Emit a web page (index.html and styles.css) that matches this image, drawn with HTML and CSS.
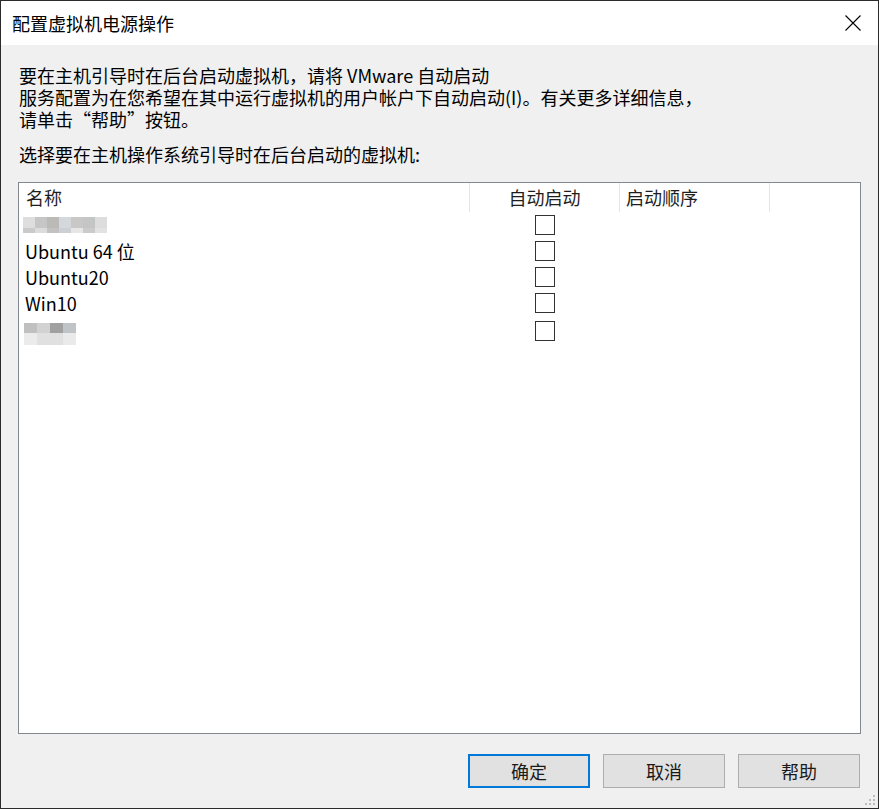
FILE: index.html
```html
<!DOCTYPE html>
<html lang="zh-CN">
<head>
  <meta charset="UTF-8">
  <meta name="viewport" content="width=device-width, initial-scale=1.0">
  <title>配置虚拟机电源操作</title>
  <link rel="stylesheet" href="styles.css">
</head>
<body>
  <div class="dialog">
    <div class="titlebar">
      <span class="title">配置虚拟机电源操作</span>
      <svg class="close" width="16" height="16" viewBox="0 0 16 16">
        <path d="M0.5 0.5 L15.5 15.5 M15.5 0.5 L0.5 15.5" stroke="#000" stroke-width="1.1" fill="none"/>
      </svg>
    </div>

    <div class="content">
      <p class="intro">要在主机引导时在后台启动虚拟机，请将 VMware 自动启动<br>服务配置为在您希望在其中运行虚拟机的用户帐户下自动启动(I)。有关更多详细信息，<br>请单击“帮助”按钮。</p>
      <p class="prompt">选择要在主机操作系统引导时在后台启动的虚拟机:</p>

      <div class="vm-list">
        <div class="list-head">
          <div class="col col-name">名称</div>
          <div class="col col-auto">自动启动</div>
          <div class="col col-order">启动顺序</div>
          <div class="col col-rest"></div>
        </div>
        <div class="vm-row">
          <div class="cell-name"><span class="mosaic mosaic-a"></span></div>
          <div class="cell-auto"><span class="check"></span></div>
        </div>
        <div class="vm-row">
          <div class="cell-name">Ubuntu 64 位</div>
          <div class="cell-auto"><span class="check"></span></div>
        </div>
        <div class="vm-row">
          <div class="cell-name">Ubuntu20</div>
          <div class="cell-auto"><span class="check"></span></div>
        </div>
        <div class="vm-row">
          <div class="cell-name">Win10</div>
          <div class="cell-auto"><span class="check"></span></div>
        </div>
        <div class="vm-row">
          <div class="cell-name"><span class="mosaic mosaic-b"></span></div>
          <div class="cell-auto"><span class="check"></span></div>
        </div>
      </div>

      <div class="actions">
        <button class="btn btn-default">确定</button>
        <button class="btn">取消</button>
        <button class="btn">帮助</button>
      </div>
    </div>

    <svg class="grip" width="12" height="12" viewBox="0 0 12 12">
      <g fill="#bcbcbc">
        <rect x="10" y="2" width="2" height="2"/>
        <rect x="6" y="6" width="2" height="2"/>
        <rect x="10" y="6" width="2" height="2"/>
        <rect x="2" y="10" width="2" height="2"/>
        <rect x="6" y="10" width="2" height="2"/>
        <rect x="10" y="10" width="2" height="2"/>
      </g>
    </svg>
  </div>
</body>
</html>
```

FILE: styles.css
```css
* { box-sizing: border-box; }
body { margin: 0; font-family: "Noto Sans CJK SC", "Noto Sans", sans-serif; font-size: 18px; color: #000; background: #f0f0f0; }

.dialog { position: relative; width: 879px; height: 809px; border: 1px solid #2b2b2b; background: #f0f0f0; display: flex; flex-direction: column; }

.titlebar { height: 44px; background: #fff; display: flex; align-items: center; justify-content: space-between; padding: 0 17px 0 11px; }
.title { font-size: 18px; line-height: 20px; }
.close { display: block; margin-top: -1px; }

.content { flex: 1; display: flex; flex-direction: column; padding: 0 17px 20px 17px; }
.intro { margin: 19px 0 0 1px; line-height: 22px; }
.prompt { margin: 13px 0 17px 1px; line-height: 22px; }

.vm-list { flex: 1; background: #fff; border: 1px solid #828790; overflow: hidden; }
.list-head { display: grid; grid-template-columns: 451px 150px 150px 1fr; height: 29px; }
.list-head .col { line-height: 29px; color: #1e1e1e; border-right: 1px solid #e5e5e5; }
.list-head .col-rest { border-right: none; }
.col-name { padding-left: 7px; }
.col-auto { text-align: center; }
.col-order { padding-left: 6px; }

.vm-row { display: grid; grid-template-columns: 451px 150px; height: 26px; }
.cell-name { padding-left: 6px; line-height: 26px; white-space: nowrap; }
.cell-auto { display: flex; justify-content: center; align-items: center; }
.check { display: block; width: 20px; height: 20px; border: 1px solid #333; background: #fff; }

.mosaic { display: block; }
.mosaic-a {
  width: 84px; height: 16px; margin: 5px 0 0 -2px;
  background:
    linear-gradient(90deg, #dedede 0 12px, #c6c6c6 12px 24px, #bcbab7 24px 36px, #d4d8dc 36px 48px, #cac8c6 48px 60px, #c4c5c5 60px 72px, #dddddd 72px 84px) top / 84px 11px no-repeat,
    linear-gradient(90deg, #cacaca 0 12px, #dcdcdc 12px 24px, #c2c2c2 24px 36px, #cdd0d3 36px 48px, #e6e6e6 48px 60px, #cbcbcb 60px 72px, #e2e2e2 72px 84px) bottom / 84px 5px no-repeat;
}
.mosaic-b {
  width: 52px; height: 22px; margin: 7px 0 0 -1px;
  background:
    linear-gradient(90deg, #c0c0c0 0 13px, #d2d2d2 13px 26px, #a0a0a0 26px 39px, #bfc4c9 39px 52px) top / 52px 10px no-repeat,
    linear-gradient(90deg, #ebebeb 0 13px, #e0e0e0 13px 26px, #e0e0e0 26px 39px, #eaeaea 39px 52px) bottom / 52px 12px no-repeat;
}

.actions { display: flex; justify-content: flex-end; gap: 13px; margin-top: 20px; padding-right: 1px; }
.btn { width: 122px; height: 34px; font-family: inherit; font-size: 18px; font-weight: 400; color: #1a1a1a; background: #e1e1e1; border: 1px solid #adadad; padding: 0; }
.btn-default { border: 2px solid #0078d7; }

.grip { position: absolute; right: 3px; bottom: 3px; }
```
